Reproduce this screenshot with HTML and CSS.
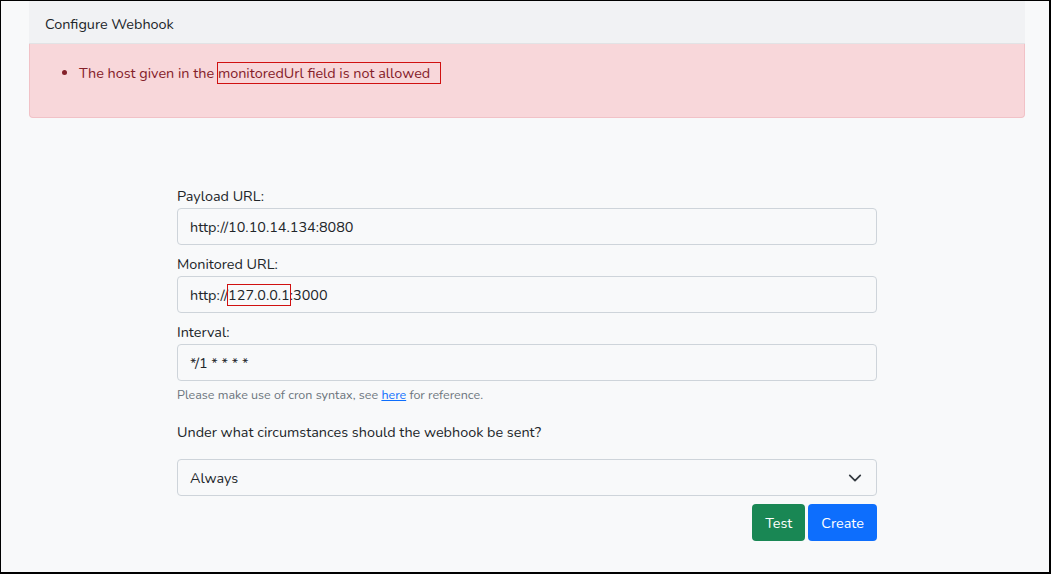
FILE: index.html
```html
<!DOCTYPE html>
<html>
<head>
<meta charset="utf-8">
<link rel="stylesheet" href="styles.css">
</head>
<body>
<div class="frame">
  <div class="card">
    <div class="card-header">Configure Webhook</div>
    <div class="alert">
      <ul class="alert-list">
        <li>The host given in the <span class="mark mark-wide">monitoredUrl field is not allowed&nbsp;</span></li>
      </ul>
    </div>
    <form class="form">
      <div class="field">
        <label class="label">Payload URL:</label>
        <div class="input">http://10.10.14.134:8080</div>
      </div>
      <div class="field">
        <label class="label">Monitored URL:</label>
        <div class="input">http://<span class="mark">127.0.0.1</span>:3000</div>
      </div>
      <div class="field">
        <label class="label">Interval:</label>
        <div class="input">*/1 * * * *</div>
        <div class="help">Please make use of cron syntax, see <a class="link">here</a> for reference.</div>
      </div>
      <div class="question">Under what circumstances should the webhook be sent?</div>
      <div class="input select">
        <span>Always</span>
        <svg class="chev" width="14" height="14" viewBox="0 0 16 16"><path d="M2 5l6 6 6-6" fill="none" stroke="#343a40" stroke-width="2" stroke-linecap="round" stroke-linejoin="round"/></svg>
      </div>
      <div class="actions">
        <button type="button" class="btn btn-test">Test</button>
        <button type="button" class="btn btn-create">Create</button>
      </div>
    </form>
  </div>
</div>
</body>
</html>
```
FILE: styles.css
```css
* { box-sizing: border-box; }
html, body { margin: 0; padding: 0; }
body {
  font-family: "Nunito", "Lato", "Open Sans", sans-serif;
  color: #212529;
  background: #f8f9fa;
}
.frame {
  width: 1051px;
  height: 574px;
  border-top: 1px solid #000;
  border-left: 1px solid #000;
  border-right: 2px solid #000;
  border-bottom: 2px solid #000;
  background: #f8f9fa;
  padding: 0 24px 0 28px;
  overflow: hidden;
}
.card {
  width: 996px;
}
.card-header {
  height: 43px;
  background: #f1f2f4;
  padding: 3px 16px 0 16px;
  display: flex;
  align-items: center;
  font-size: 14.4px;
  color: #212529;
  border-bottom: 1px solid #e2e3e5;
}
.alert {
  height: 74px;
  background: #f8d7da;
  border: 1px solid #f1c2c7;
  border-top: none;
  border-radius: 0 0 4px 4px;
  color: #842029;
  font-size: 14.4px;
  padding: 19px 16px 0 16px;
}
.alert-list {
  margin: 0;
  padding-left: 33px;
}
.mark {
  outline: 1px solid #d01010;
  outline-offset: 0;
}
.mark-wide {
  padding-right: 6px;
}
.form {
  width: 700px;
  margin: 69px 0 0 148px;
  font-size: 14.4px;
}
.field {
  margin-bottom: 10px;
}
.label {
  display: block;
  line-height: 18px;
  margin-bottom: 3px;
}
.input {
  height: 37px;
  border: 1px solid #ced4da;
  border-radius: 4px;
  padding: 0 12px;
  display: flex;
  align-items: center;
  color: #212529;
  background: #f8f9fa;
}
.help {
  font-size: 12.5px;
  color: #6c757d;
  margin-top: 6px;
  line-height: 15px;
}
.link {
  color: #0d6efd;
  text-decoration: underline;
}
.question {
  margin-top: 21px;
  margin-bottom: 18px;
  line-height: 18px;
}
.select {
  justify-content: space-between;
}
.chev {
  margin-right: 2px;
}
.actions {
  display: flex;
  justify-content: flex-end;
  gap: 3px;
  margin-top: 8px;
}
.btn {
  font-family: inherit;
  font-size: 14.4px;
  height: 37px;
  border: none;
  border-radius: 4px;
  color: #fff;
  padding: 0 13px;
}
.btn-test { background: #198754; }
.btn-create { background: #0d6efd; }
```
